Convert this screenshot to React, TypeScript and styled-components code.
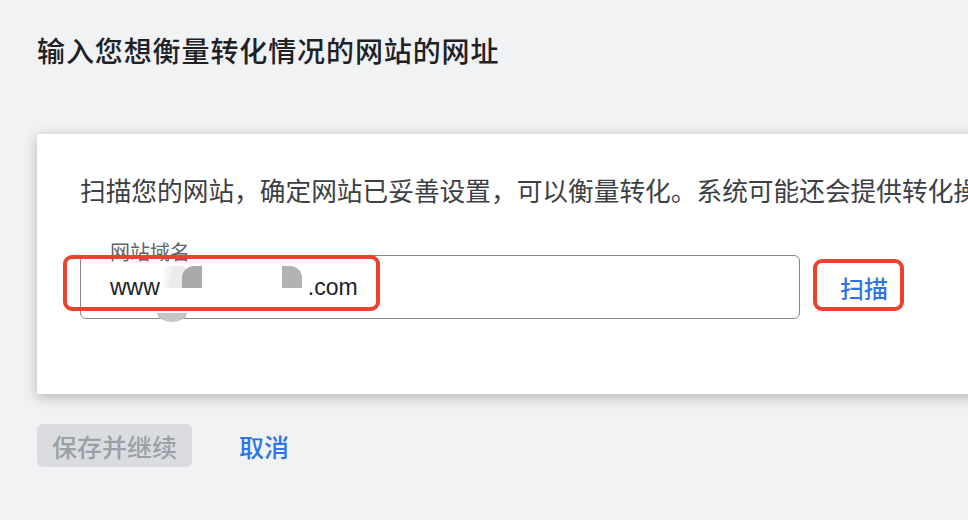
import * as React from 'react';
import styled, { createGlobalStyle } from 'styled-components';

const GlobalStyle = createGlobalStyle`
    html, body {
        margin: 0;
        padding: 0;
        background: #f1f2f4;
        overflow: hidden;
    }
    body {
        font-family: "Liberation Sans", "Noto Sans CJK SC", sans-serif;
    }
`;

export default function App() {
    return (
        <>
            <GlobalStyle />
            <Page>
                <Heading>输入您想衡量转化情况的网站的网址</Heading>
                <Card>
                    <Description>
                        扫描您的网站，确定网站已妥善设置，可以衡量转化。系统可能还会提供转化操作建议。
                    </Description>
                    <FieldRow>
                        <Field>
                            <Label>网站域名</Label>
                            <Value>
                                <span>www</span>
                                <Redacted>
                                    <Blob $left={3} $top={10} $width={22} $height={22} $color="linear-gradient(100deg, rgba(235,235,235,0) 0%, #ebebeb 45%)" />
                                    <Blob $left={22} $top={10} $width={20} $height={22} $color="#a9a9a9" $radius="12px 0 0 0" />
                                    <Blob $left={122} $top={10} $width={20} $height={22} $color="#b2b2b2" $radius="0 12px 0 0" />
                                    <Blob $left={-3} $top={57} $width={30} $height={9} $color="#c6c6c6" $radius="0 0 15px 15px / 0 0 9px 9px" />
                                </Redacted>
                                <span>.com</span>
                            </Value>
                            <Highlight $left={-18} $top={-1} $width={317} $height={56} />
                        </Field>
                        <ScanButton>
                            扫描
                            <Highlight $left={-3} $top={-4} $width={91} $height={52} />
                        </ScanButton>
                    </FieldRow>
                </Card>
                <Actions>
                    <SaveButton disabled>保存并继续</SaveButton>
                    <CancelButton>取消</CancelButton>
                </Actions>
            </Page>
        </>
    );
}


/** styling */

const Page = styled.div`
    display: flex;
    flex-direction: column;
    padding: 35px 0 0 37px;
    height: 520px;
    box-sizing: border-box;
`;

const Heading = styled.h1`
    margin: 0;
    font-size: 28px;
    line-height: 36px;
    font-weight: 500;
    letter-spacing: 0.9px;
    color: #202124;
    white-space: nowrap;
`;

const Card = styled.div`
    width: 1040px;
    margin-top: 63px;
    padding: 40px 0 75px 43px;
    box-sizing: border-box;
    background: #ffffff;
    box-shadow: 0 3px 12px rgba(60, 64, 67, 0.35);
`;

const Description = styled.p`
    margin: 0;
    font-size: 25.7px;
    line-height: 36px;
    color: #3c4043;
    white-space: nowrap;
    overflow: hidden;
`;

const FieldRow = styled.div`
    display: flex;
    align-items: center;
    margin-top: 45px;
`;

const Field = styled.div`
    position: relative;
    width: 720px;
    height: 64px;
    box-sizing: border-box;
    border: 1px solid #80868b;
    border-radius: 6px;
`;

const Label = styled.span`
    position: absolute;
    left: 25px;
    top: -15px;
    padding: 0 4px;
    background: #ffffff;
    font-size: 20px;
    line-height: 24px;
    color: #5f6368;
`;

const Value = styled.div`
    display: flex;
    align-items: center;
    height: 100%;
    padding-left: 29px;
    font-size: 23px;
    color: #202124;
`;

const Redacted = styled.span`
    position: relative;
    display: inline-block;
    width: 148px;
    height: 100%;
`;

const Blob = styled.span<{ $left: number; $top: number; $width: number; $height: number; $color: string; $radius?: string }>`
    position: absolute;
    left: ${p => p.$left}px;
    top: ${p => p.$top}px;
    width: ${p => p.$width}px;
    height: ${p => p.$height}px;
    background: ${p => p.$color};
    border-radius: ${p => p.$radius || '0'};
`;

const Highlight = styled.span<{ $left: number; $top: number; $width: number; $height: number }>`
    position: absolute;
    left: ${p => p.$left}px;
    top: ${p => p.$top}px;
    width: ${p => p.$width}px;
    height: ${p => p.$height}px;
    box-sizing: border-box;
    border: 4px solid #ea4230;
    border-radius: 9px;
    pointer-events: none;
`;

const ScanButton = styled.button`
    position: relative;
    height: 48px;
    margin-left: 16px;
    padding: 0 24px;
    border: none;
    background: transparent;
    font-family: inherit;
    font-size: 24px;
    font-weight: 500;
    color: #2f74e6;
    cursor: pointer;
`;

const Actions = styled.div`
    display: flex;
    align-items: center;
    gap: 47px;
    margin-top: 30px;
`;

const SaveButton = styled.button`
    height: 43px;
    padding: 0 15px;
    border: none;
    border-radius: 6px;
    background: #dadce0;
    font-family: inherit;
    font-size: 25px;
    font-weight: 500;
    color: #9aa0a6;
`;

const CancelButton = styled.button`
    height: 43px;
    padding: 0;
    border: none;
    background: transparent;
    font-family: inherit;
    font-size: 25px;
    font-weight: 500;
    color: #2f74e6;
    cursor: pointer;
`;
